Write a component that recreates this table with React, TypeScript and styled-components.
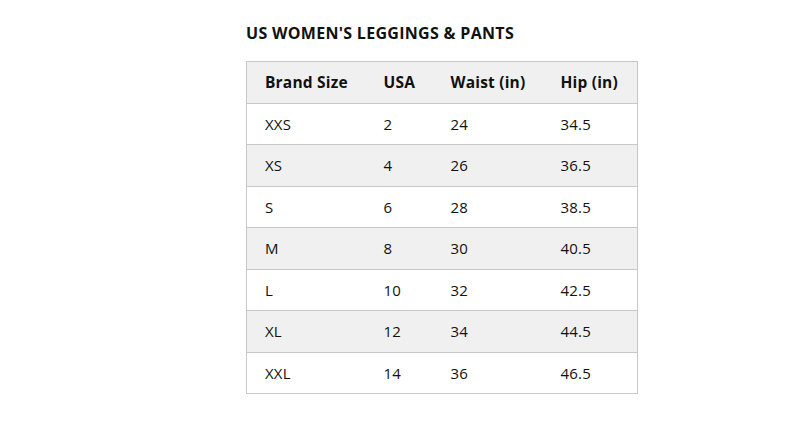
import React from "react";
import styled, { createGlobalStyle } from "styled-components";

const Global = createGlobalStyle`
  html, body { margin: 0; padding: 0; background: #ffffff; }
  body { font-family: "Open Sans", "Noto Sans", sans-serif; color: #111111; }
`;

const Page = styled.div`
  width: 803px;
  height: 443px;
  box-sizing: border-box;
  padding: 23px 0 0 246px;
`;

const Title = styled.h2`
  margin: 0 0 18px 0;
  font-size: 16px;
  line-height: 20px;
  font-weight: 700;
  letter-spacing: 0.3px;
  color: #111111;
`;

const Table = styled.table`
  border-collapse: collapse;
  width: 391px;
  table-layout: fixed;
  border: 1px solid #c8c8c8;
  font-size: 15px;
`;

const Row = styled.tr<{ $shade?: boolean }>`
  height: 41.5px;
  background: ${(p) => (p.$shade ? "#f0f0f0" : "#ffffff")};
  border-bottom: 1px solid #c8c8c8;
`;

const HeadCell = styled.th<{ $w: number }>`
  box-sizing: border-box;
  width: ${(p) => p.$w}px;
  text-align: left;
  font-weight: 700;
  font-size: 15.5px;
  letter-spacing: 0.2px;
  padding: 0 0 0 18px;
  color: #111111;
`;

const Cell = styled.td`
  box-sizing: border-box;
  padding: 0 0 0 18px;
  letter-spacing: 0.2px;
  color: #111111;
`;

const cols = [
  { label: "Brand Size", w: 119 },
  { label: "USA", w: 67 },
  { label: "Waist (in)", w: 110 },
  { label: "Hip (in)", w: 95 },
];

const rows = [
  ["XXS", "2", "24", "34.5"],
  ["XS", "4", "26", "36.5"],
  ["S", "6", "28", "38.5"],
  ["M", "8", "30", "40.5"],
  ["L", "10", "32", "42.5"],
  ["XL", "12", "34", "44.5"],
  ["XXL", "14", "36", "46.5"],
];

export default function App() {
  return (
    <Page>
      <Global />
      <Title>US WOMEN'S LEGGINGS &amp; PANTS</Title>
      <Table>
        <thead>
          <Row $shade>
            {cols.map((c) => (
              <HeadCell key={c.label} $w={c.w}>
                {c.label}
              </HeadCell>
            ))}
          </Row>
        </thead>
        <tbody>
          {rows.map((r, i) => (
            <Row key={r[0]} $shade={i % 2 === 1}>
              {r.map((v, j) => (
                <Cell key={j}>{v}</Cell>
              ))}
            </Row>
          ))}
        </tbody>
      </Table>
    </Page>
  );
}
